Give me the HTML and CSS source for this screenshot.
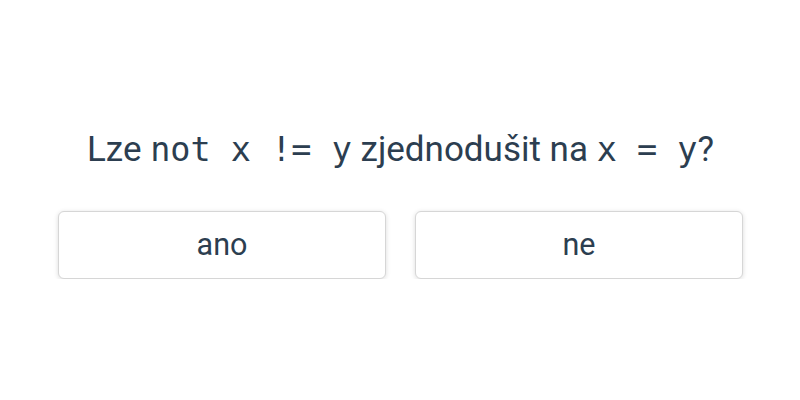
FILE: index.html
```html
<!DOCTYPE html>
<html lang="cs">
<head>
<meta charset="utf-8">
<link rel="stylesheet" href="styles.css">
</head>
<body>
<main class="quiz">
  <p class="question">Lze <code>not x != y</code> zjednodušit na <code>x = y</code>?</p>
  <div class="answers">
    <button class="answer">ano</button>
    <button class="answer">ne</button>
  </div>
</main>
</body>
</html>
```
FILE: styles.css
```css
html, body {
  margin: 0;
  padding: 0;
  background: #fff;
}
body {
  font-family: Roboto, "Liberation Sans", sans-serif;
  color: #2c3e50;
}
.quiz {
  width: 685px;
  margin: 0 auto;
  padding: 124px 0 0 1px;
}
.question {
  margin: 0;
  text-align: center;
  font-size: 35px;
  line-height: 52px;
}
.question code {
  font-family: "DejaVu Sans Mono", monospace;
  font-size: 33.5px;
  white-space: pre;
}
.answers {
  display: flex;
  gap: 29px;
  margin-top: 35px;
}
.answer {
  flex: 1;
  height: 68px;
  background: #fff;
  border: 1px solid #d6d6d6;
  border-radius: 6px;
  box-shadow: 0 1px 5px rgba(0,0,0,0.14);
  font-family: Roboto, "Liberation Sans", sans-serif;
  font-size: 30.5px;
  color: #2c3e50;
  padding: 0 0 2px;
}
```
